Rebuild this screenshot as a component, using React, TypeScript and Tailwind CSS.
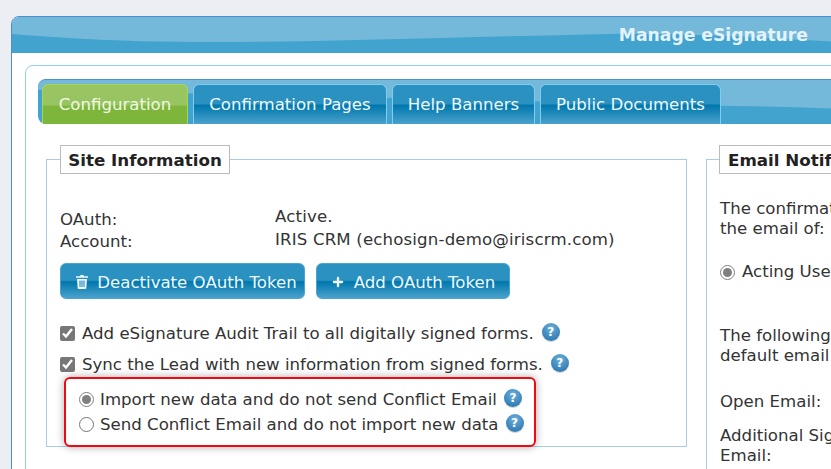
import { Plus } from "lucide-react";

const blueGloss = "bg-[linear-gradient(#2b91c1_0%,#2b91c1_48%,#0077ad_52%,#4ba2cc_100%)]";

const Wave = (props: any) => (
    <svg className="absolute inset-0 w-full h-full" viewBox={props.viewBox} preserveAspectRatio="none" aria-hidden="true">
        <path d={props.d} fill="#74b9d9" />
    </svg>
);

const Trash = () => (
    <svg className="w-[12px] h-[14px]" viewBox="0 0 12 14" fill="currentColor" aria-hidden="true">
        <path d="M4.5 0h3l.5 1.2H12v1.6H0V1.2h4zM1 4h10l-.7 9a1 1 0 0 1-1 1H2.700a1 1 0 0 1-1-1zM3.500 5.500v6.500h1V5.500zm2 0v6.500h1V5.500zm2 0v6.500h1V5.500z" fillRule="evenodd" />
    </svg>
);

const Help = () => (
    <span className="inline-flex items-center justify-center w-[18px] h-[18px] -mt-[3px] rounded-full text-white text-[12px] font-bold leading-none shadow-[0_1px_1px_#0003] bg-[radial-gradient(circle_at_50%_30%,#6cb0dc,#1f6ca8)]">
        ?
    </span>
);

const Tab = (props: any) => (
    <div
        className={
            props.active
                ? "h-full pt-[2px] flex items-center justify-center rounded-t-md border border-b-0 border-[#a5d84f] text-[#f2f8e6] bg-[linear-gradient(#98c561_0%,#98c561_50%,#7db63a_55%,#7db63a_100%)] " + props.width
                : "h-full pt-[2px] flex items-center justify-center rounded-t-md border border-b-0 border-[#7fcdf0] text-[#eef8fd] " + blueGloss + " " + props.width
        }
    >
        {props.children}
    </div>
);

const Legend = (props: any) => (
    <div className={"h-[29px] pt-[2px] -mt-[15px] flex items-center bg-white border border-[#bbbbbb] font-bold text-[#222] text-[16.7px] " + props.className}>
        {props.children}
    </div>
);

const TokenButton = (props: any) => (
    <button className={"h-[36px] pt-[4px] flex items-center justify-center gap-[9px] rounded-md border border-[#4aa5d0] text-[#eef8fd] " + blueGloss + " " + props.className}>
        <span className="-mt-[3px] flex">{props.icon}</span>
        {props.children}
    </button>
);

export default function App() {
    return (
        <div className="relative w-[831px] h-[469px] overflow-hidden bg-[#eceef3] bg-[radial-gradient(#b5b9c2_0.6px,transparent_1px)] bg-[length:93px_60px] pt-[16px] pl-[11px] text-[16.6px] text-[#333] font-['DejaVu_Sans',sans-serif]">
            <div className="w-[830px] h-[500px] border border-[#4a90d0] rounded-tl-lg bg-white">
                {/* header */}
                <div className="relative h-[36px] pt-[2px] rounded-tl-lg overflow-hidden bg-[#42a3cf] flex items-center justify-end pr-[32px]">
                    <Wave viewBox="0 0 830 36" d="M0 17C60 22 120 25 200 25C320 25 450 20 600 17C680 16 760 21 830 25L830 0L0 0Z" />
                    <span className="relative font-bold text-[17.2px] text-[#e4f3fa]">Manage eSignature</span>
                </div>

                <div className="pt-[12px] pl-[13px]">
                    <div className="w-[830px] h-[500px] border border-[#90d0f0] rounded-tl-lg pt-[13px] pl-[12px]">
                        {/* tabs */}
                        <div className="relative h-[45px] rounded-tl-lg rounded-bl-lg overflow-hidden bg-[#42a3cf] border-t border-[#4a90d0] pt-[4px] pl-[4px]">
                            <Wave viewBox="0 0 830 45" d="M0 10L680 26C730 27 780 28 830 30L830 0L0 0Z" />
                            <div className="relative h-full flex gap-[5px]">
                                <Tab active width="w-[146px]">Configuration</Tab>
                                <Tab width="w-[194px]">Confirmation Pages</Tab>
                                <Tab width="w-[143px]">Help Banners</Tab>
                                <Tab width="w-[181px]">Public Documents</Tab>
                            </div>
                        </div>

                        <div className="flex gap-[19px] pl-[8px] pt-[35px]">
                            {/* site information */}
                            <div className="relative w-[641px] h-[288px] shrink-0 border border-[#a8cbe6]">
                                <Legend className="ml-[13px] w-[170px] justify-center">Site Information</Legend>
                                <div className="pl-[13px] pt-[28px]">
                                    <div className="flex h-[45px]">
                                        <div className="w-[215px] pt-[7px] leading-[22px]">
                                            <div>OAuth:</div>
                                            <div>Account:</div>
                                        </div>
                                        <div className="pt-[3px] leading-[23px] tracking-[0.16px]">
                                            <div>Active.</div>
                                            <div>IRIS CRM (echosign-demo@iriscrm.com)</div>
                                        </div>
                                    </div>
                                    <div className="flex gap-[11px] mt-[16px]">
                                        <TokenButton className="w-[245px] pl-[8px]" icon={<Trash />}>Deactivate OAuth Token</TokenButton>
                                        <TokenButton className="w-[194px]" icon={<Plus size={14} strokeWidth={4} />}>Add OAuth Token</TokenButton>
                                    </div>
                                    <label className="flex items-center gap-[7px] h-[24px] mt-[22px]">
                                        <input type="checkbox" checked readOnly className="w-[15px] h-[15px] accent-[#777777]" />
                                        <span className="pt-[2px]">Add eSignature Audit Trail to all digitally signed forms.</span>
                                        <span className="ml-[1px] flex"><Help /></span>
                                    </label>
                                    <label className="flex items-center gap-[7px] h-[24px] mt-[7px]">
                                        <input type="checkbox" checked readOnly className="w-[15px] h-[15px] accent-[#777777]" />
                                        <span className="pt-[2px]">Sync the Lead with new information from signed forms.</span>
                                        <span className="ml-[1px] flex"><Help /></span>
                                    </label>
                                    <div className="pl-[19px] pt-[11px]">
                                        <label className="flex items-center gap-[6px] h-[25px]">
                                            <input type="radio" name="conflict" checked readOnly className="w-[15px] h-[15px] accent-[#808080]" />
                                            <span className="pt-[2px]">Import new data and do not send Conflict Email</span>
                                            <span className="ml-[1px] flex"><Help /></span>
                                        </label>
                                        <label className="flex items-center gap-[6px] h-[25px]">
                                            <input type="radio" name="conflict" readOnly className="w-[15px] h-[15px] accent-[#808080]" />
                                            <span className="pt-[2px]">Send Conflict Email and do not import new data</span>
                                            <span className="ml-[1px] flex"><Help /></span>
                                        </label>
                                    </div>
                                </div>
                                {/* annotation */}
                                <div className="absolute left-[17px] top-[217px] w-[472px] h-[70px] border-2 border-[#ee0a14] rounded-md shadow-[0_0_8px_#0005]" />
                            </div>

                            {/* email notifications */}
                            <div className="w-[400px] h-[400px] shrink-0 border border-[#a8cbe6]">
                                <Legend className="ml-[12px] w-[200px] pl-[8px]">Email Notifications</Legend>
                                <div className="pl-[13px] pt-[25px] leading-[20px] whitespace-nowrap">
                                    <div>The confirmation will be sent to</div>
                                    <div>the email of:</div>
                                    <label className="flex items-center gap-[7px] mt-[23px]">
                                        <input type="radio" name="acting" checked readOnly className="w-[15px] h-[15px] accent-[#808080]" />
                                        <span>Acting User</span>
                                    </label>
                                    <div className="mt-[44px]">The following will override the</div>
                                    <div>default email address:</div>
                                    <div className="mt-[26px]">Open Email:</div>
                                    <div className="mt-[14px]">Additional Signer</div>
                                    <div>Email:</div>
                                </div>
                            </div>
                        </div>
                    </div>
                </div>
            </div>
        </div>
    );
}
